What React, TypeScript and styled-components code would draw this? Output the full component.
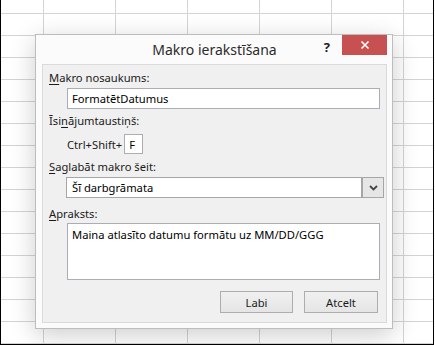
import React from 'react';
import styled, { createGlobalStyle } from 'styled-components';

const GlobalStyle = createGlobalStyle`
  body {
    margin: 0;
    background: #ffffff;
    font-family: "Noto Sans", "Open Sans", sans-serif;
  }
`;

// Excel sheet behind the dialog
const Sheet = styled.div`
  box-sizing: border-box;
  width: 434px;
  height: 345px;
  border-left: 1px solid #000;
  border-right: 1px solid #000;
  border-bottom: 1px solid #000;
  padding: 34px 0 0 34px;
  background-color: #fff;
  background-image:
    repeating-linear-gradient(to right, transparent 0, transparent 42px, #d4d4d4 42px, #d4d4d4 43px, transparent 43px, transparent 72px),
    repeating-linear-gradient(to bottom, transparent 0, transparent 13px, #d4d4d4 13px, #d4d4d4 14px, transparent 14px, transparent 22px);
`;

const Dialog = styled.div`
  box-sizing: border-box;
  width: 358px;
  height: 295px;
  border: 1px solid #bdbdbd;
  background: #fbfbfb;
  box-shadow: 0 6px 24px rgba(0, 0, 0, 0.2);
  padding: 0 5px 5px 6px;
  display: flex;
  flex-direction: column;
`;

const TitleBar = styled.div`
  height: 29px;
  display: grid;
  grid-template-columns: 1fr auto 1fr;
  align-items: start;
`;

const Title = styled.div`
  grid-column: 2;
  padding-top: 5px;
  font-size: 14px;
  line-height: 20px;
  color: #2b2b2b;
  white-space: nowrap;
`;

const Controls = styled.div`
  grid-column: 3;
  justify-self: end;
  display: flex;
  align-items: flex-start;
  gap: 12px;
`;

const HelpMark = styled.span`
  font-weight: 700;
  font-size: 13px;
  line-height: 20px;
  padding-top: 2px;
  color: #222;
`;

const CloseButton = styled.div`
  width: 45px;
  height: 20px;
  background: #c75050;
  display: flex;
  align-items: center;
  justify-content: center;
`;

const Panel = styled.div`
  flex: 1;
  background: #f0f0f0;
  border: 1px solid #dadada;
  padding: 5px 7px 0 6px;
  display: flex;
  flex-direction: column;
`;

const Label = styled.div<{ $gap: number }>`
  margin-top: ${p => p.$gap}px;
  font-size: 11.2px;
  line-height: 16px;
  color: #1a1a1a;
  white-space: nowrap;

  u {
    text-decoration-thickness: 1px;
    text-underline-offset: 2px;
  }
`;

const TextField = styled.input`
  box-sizing: border-box;
  margin: 2px 0 0 18px;
  width: 313px;
  height: 21px;
  border: 1px solid #abadb3;
  background: #fff;
  padding: 0 4px;
  font-family: inherit;
  font-size: 11.2px;
  color: #000;
  outline: none;
`;

const ShortcutRow = styled.div`
  margin: 5px 0 0 18px;
  display: flex;
  align-items: center;
  gap: 2px;
  font-size: 11.2px;
  color: #1a1a1a;
`;

const KeyBox = styled.input`
  box-sizing: border-box;
  margin: 0;
  width: 19px;
  height: 20px;
  border: 1px solid #abadb3;
  background: #fff;
  padding: 0 0 0 4px;
  font-family: inherit;
  font-size: 11.2px;
  color: #000;
  outline: none;
`;

const Dropdown = styled.div`
  box-sizing: border-box;
  margin: 2px 0 0 17px;
  width: 318px;
  height: 21px;
  border: 1px solid #a6a6a6;
  background: #fff;
  display: flex;
  font-size: 11.2px;
  color: #000;
`;

const DropdownValue = styled.div`
  flex: 1;
  padding-left: 5px;
  line-height: 19px;
`;

const DropdownButton = styled.div`
  width: 20px;
  border-left: 2px solid #a6a6a6;
  background: #e6e6e6;
  display: flex;
  align-items: center;
  justify-content: center;
`;

const TextArea = styled.textarea`
  box-sizing: border-box;
  margin: 1px 0 0 18px;
  width: 313px;
  height: 57px;
  border: 1px solid #abadb3;
  background: #fff;
  padding: 3px 4px;
  font-family: inherit;
  font-size: 11.2px;
  line-height: 15px;
  color: #000;
  resize: none;
  outline: none;
`;

const ButtonRow = styled.div`
  margin: 11px 1px 0 0;
  display: flex;
  justify-content: flex-end;
  gap: 11px;
`;

const Button = styled.button<{ $w: number }>`
  box-sizing: border-box;
  width: ${p => p.$w}px;
  height: 22px;
  border: 1px solid #adadad;
  background: linear-gradient(#f0f0f0, #e5e5e5);
  font-family: inherit;
  font-size: 11.2px;
  color: #1a1a1a;
  padding: 0;
`;

export default function App() {
  return (
    <>
      <GlobalStyle />
      <Sheet>
        <Dialog>
          <TitleBar>
            <Title>Makro ierakstīšana</Title>
            <Controls>
              <HelpMark>?</HelpMark>
              <CloseButton>
                <svg width="10" height="10" viewBox="0 0 10 10">
                  <path d="M1.5 1.5 L8.5 8.5 M8.5 1.5 L1.5 8.5" stroke="#fff" strokeWidth="1.6" />
                </svg>
              </CloseButton>
            </Controls>
          </TitleBar>

          <Panel>
            <Label $gap={0}><u>M</u>akro nosaukums:</Label>
            <TextField defaultValue="FormatētDatumus" readOnly />

            <Label $gap={4}>Īsi<u>n</u>ājumtaustiņš:</Label>
            <ShortcutRow>
              <span>Ctrl+Shift+</span>
              <KeyBox defaultValue="F" readOnly />
            </ShortcutRow>

            <Label $gap={5}><u>S</u>aglabāt makro šeit:</Label>
            <Dropdown>
              <DropdownValue>Šī darbgrāmata</DropdownValue>
              <DropdownButton>
                <svg width="9" height="6" viewBox="0 0 9 6">
                  <path d="M1 1 L4.5 4.5 L8 1" stroke="#444" strokeWidth="1.8" fill="none" />
                </svg>
              </DropdownButton>
            </Dropdown>

            <Label $gap={8}><u>A</u>praksts:</Label>
            <TextArea defaultValue="Maina atlasīto datumu formātu uz MM/DD/GGG" readOnly />

            <ButtonRow>
              <Button $w={73}>Labi</Button>
              <Button $w={74}>Atcelt</Button>
            </ButtonRow>
          </Panel>
        </Dialog>
      </Sheet>
    </>
  );
}
